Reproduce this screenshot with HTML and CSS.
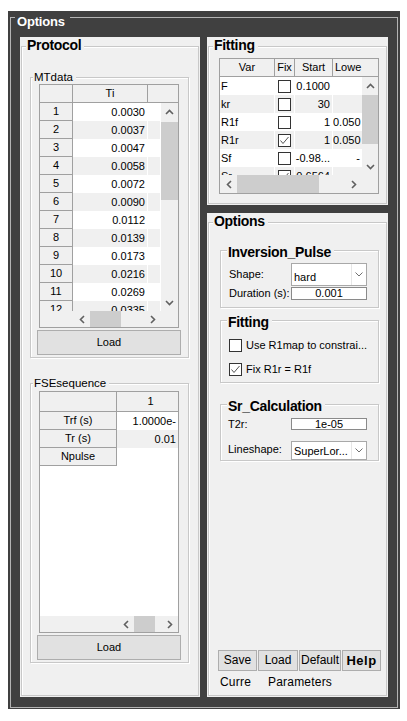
FILE: index.html
```html
<!DOCTYPE html>
<html>
<head>
<meta charset="utf-8">
<link rel="stylesheet" href="styles.css">
</head>
<body>
<div class="outer">
  <span class="outer-title">Options</span>

  <section class="panel protocol">
    <span class="ptitle">Protocol</span>

    <div class="group mtgroup">
      <span class="gtitle">MTdata</span>
      <div class="tbl mt">
        <div class="thead">
          <div class="th mt-rh"></div>
          <div class="th mt-val">Ti</div>
          <div class="th last grow"></div>
        </div>
        <div class="tbody">
          <div class="rows">
            <div class="row"><div class="rh mt-rh">1</div><div class="cell mt-val num">0.0030</div><div class="cell mt-ext"></div></div>
            <div class="row alt"><div class="rh mt-rh">2</div><div class="cell mt-val num">0.0037</div><div class="cell mt-ext"></div></div>
            <div class="row"><div class="rh mt-rh">3</div><div class="cell mt-val num">0.0047</div><div class="cell mt-ext"></div></div>
            <div class="row alt"><div class="rh mt-rh">4</div><div class="cell mt-val num">0.0058</div><div class="cell mt-ext"></div></div>
            <div class="row"><div class="rh mt-rh">5</div><div class="cell mt-val num">0.0072</div><div class="cell mt-ext"></div></div>
            <div class="row alt"><div class="rh mt-rh">6</div><div class="cell mt-val num">0.0090</div><div class="cell mt-ext"></div></div>
            <div class="row"><div class="rh mt-rh">7</div><div class="cell mt-val num">0.0112</div><div class="cell mt-ext"></div></div>
            <div class="row alt"><div class="rh mt-rh">8</div><div class="cell mt-val num">0.0139</div><div class="cell mt-ext"></div></div>
            <div class="row"><div class="rh mt-rh">9</div><div class="cell mt-val num">0.0173</div><div class="cell mt-ext"></div></div>
            <div class="row alt"><div class="rh mt-rh">10</div><div class="cell mt-val num">0.0216</div><div class="cell mt-ext"></div></div>
            <div class="row"><div class="rh mt-rh">11</div><div class="cell mt-val num">0.0269</div><div class="cell mt-ext"></div></div>
            <div class="row alt"><div class="rh mt-rh">12</div><div class="cell mt-val num">0.0335</div><div class="cell mt-ext"></div></div>
          </div>
          <div class="vscroll">
            <div class="sbtn"><svg class="ar" width="9" height="6" viewBox="0 0 9 6"><polyline points="1,5 4.5,1.5 8,5"/></svg></div>
            <div class="thumb mt-vthumb"></div>
            <div class="fill"></div>
            <div class="sbtn"><svg class="ar" width="9" height="6" viewBox="0 0 9 6"><polyline points="1,1 4.5,4.5 8,1"/></svg></div>
          </div>
        </div>
        <div class="hscroll mt-hs">
          <div class="hs-blank mt-rh"></div>
          <div class="hs-track mt-track">
            <div class="sbtn"><svg class="ar" width="6" height="9" viewBox="0 0 6 9"><polyline points="5,1 1.5,4.5 5,8"/></svg></div>
            <div class="thumb mt-hthumb"></div>
            <div class="fill"></div>
            <div class="sbtn"><svg class="ar" width="6" height="9" viewBox="0 0 6 9"><polyline points="1,1 4.5,4.5 1,8"/></svg></div>
          </div>
          <div class="fill"></div>
        </div>
      </div>
      <button class="btn load">Load</button>
    </div>

    <div class="group fsegroup">
      <span class="gtitle">FSEsequence</span>
      <div class="tbl fse">
        <div class="thead fse-head">
          <div class="th fse-rh"></div>
          <div class="th last fse-hval">1</div>
        </div>
        <div class="tbody">
          <div class="rows fse-rows">
            <div class="row"><div class="rh fse-rh">Trf (s)</div><div class="cell fse-val num">1.0000e-</div></div>
            <div class="row alt"><div class="rh fse-rh">Tr (s)</div><div class="cell fse-val num">0.01</div></div>
            <div class="row"><div class="rh fse-rh">Npulse</div><div class="cell fse-val num"></div></div>
          </div>
        </div>
        <div class="hscroll fse-hs">
          <div class="hs-blank fse-rh"></div>
          <div class="hs-track fse-track">
            <div class="sbtn"><svg class="ar" width="6" height="9" viewBox="0 0 6 9"><polyline points="5,1 1.5,4.5 5,8"/></svg></div>
            <div class="thumb fse-hthumb"></div>
            <div class="fill"></div>
            <div class="sbtn"><svg class="ar" width="6" height="9" viewBox="0 0 6 9"><polyline points="1,1 4.5,4.5 1,8"/></svg></div>
          </div>
        </div>
      </div>
      <button class="btn load">Load</button>
    </div>
  </section>

  <div class="rightcol">
    <section class="panel fitpanel">
      <span class="ptitle">Fitting</span>
      <div class="tbl fit">
        <div class="thead">
          <div class="fit-hview">
            <div class="th f-var">Var</div>
            <div class="th f-fix">Fix</div>
            <div class="th f-start">Start</div>
            <div class="th f-lowh">Lowe</div>
          </div>
          <div class="fill"></div>
        </div>
        <div class="tbody">
          <div class="rows fit-rows">
            <div class="row"><div class="cell f-var txt">F</div><div class="cell f-fix ck"><span class="cb"></span></div><div class="cell f-start num">0.1000</div><div class="cell f-low num"></div></div>
            <div class="row alt"><div class="cell f-var txt">kr</div><div class="cell f-fix ck"><span class="cb"></span></div><div class="cell f-start num">30</div><div class="cell f-low num"></div></div>
            <div class="row"><div class="cell f-var txt">R1f</div><div class="cell f-fix ck"><span class="cb"></span></div><div class="cell f-start num">1</div><div class="cell f-low num">0.050</div></div>
            <div class="row alt"><div class="cell f-var txt">R1r</div><div class="cell f-fix ck"><span class="cb"><svg width="11" height="11" viewBox="0 0 11 11"><polyline points="1.5,5.5 4,8.5 9.5,2"/></svg></span></div><div class="cell f-start num">1</div><div class="cell f-low num">0.050</div></div>
            <div class="row"><div class="cell f-var txt">Sf</div><div class="cell f-fix ck"><span class="cb"></span></div><div class="cell f-start num">-0.98...</div><div class="cell f-low num">-</div></div>
            <div class="row alt"><div class="cell f-var txt">Sr</div><div class="cell f-fix ck"><span class="cb"><svg width="11" height="11" viewBox="0 0 11 11"><polyline points="1.5,5.5 4,8.5 9.5,2"/></svg></span></div><div class="cell f-start num">0.6564</div><div class="cell f-low num"></div></div>
          </div>
          <div class="vscroll fit-vs">
            <div class="sbtn"><svg class="ar" width="9" height="6" viewBox="0 0 9 6"><polyline points="1,5 4.5,1.5 8,5"/></svg></div>
            <div class="thumb fit-vthumb"></div>
            <div class="fill"></div>
            <div class="sbtn"><svg class="ar" width="9" height="6" viewBox="0 0 9 6"><polyline points="1,1 4.5,4.5 8,1"/></svg></div>
          </div>
        </div>
        <div class="hscroll fit-hs">
          <div class="hs-track fit-track">
            <div class="sbtn"><svg class="ar" width="6" height="9" viewBox="0 0 6 9"><polyline points="5,1 1.5,4.5 5,8"/></svg></div>
            <div class="thumb fit-hthumb"></div>
            <div class="fill"></div>
            <div class="sbtn"><svg class="ar" width="6" height="9" viewBox="0 0 6 9"><polyline points="1,1 4.5,4.5 1,8"/></svg></div>
          </div>
          <div class="fill"></div>
        </div>
      </div>
    </section>

    <section class="panel optpanel">
      <span class="ptitle">Options</span>

      <div class="group invgroup">
        <span class="gtitle big">Inversion_Pulse</span>
        <div class="ctlrow r-shape">
          <span class="lbl lbl-shape">Shape:</span>
          <div class="select sel-shape"><span class="stext">hard</span><span class="sarrow"><svg class="dd" width="8" height="5" viewBox="0 0 8 5"><polyline points="0.5,0.5 4,4 7.5,0.5"/></svg></span></div>
        </div>
        <div class="ctlrow r-dur">
          <span class="lbl">Duration (s):</span>
          <div class="input in-dur">0.001</div>
        </div>
      </div>

      <div class="group fitgroup">
        <span class="gtitle big">Fitting</span>
        <div class="cbrow"><span class="cb"></span><span>Use R1map to constrai...</span></div>
        <div class="cbrow cb2"><span class="cb"><svg width="11" height="11" viewBox="0 0 11 11"><polyline points="1.5,5.5 4,8.5 9.5,2"/></svg></span><span>Fix R1r = R1f</span></div>
      </div>

      <div class="group srgroup">
        <span class="gtitle big">Sr_Calculation</span>
        <div class="ctlrow r-t2r">
          <span class="lbl lbl-sr">T2r:</span>
          <div class="input in-t2r">1e-05</div>
        </div>
        <div class="ctlrow r-line">
          <span class="lbl lbl-sr lbl-line">Lineshape:</span>
          <div class="select sel-line"><span class="stext">SuperLor...</span><span class="sarrow"><svg class="dd" width="8" height="5" viewBox="0 0 8 5"><polyline points="0.5,0.5 4,4 7.5,0.5"/></svg></span></div>
        </div>
      </div>

      <div class="fill"></div>

      <div class="btnrow">
        <button class="btn b-save">Save</button>
        <button class="btn b-load">Load</button>
        <button class="btn b-def">Default</button>
        <button class="btn b-help">Help</button>
      </div>
      <div class="curtext"><span class="curre">Curre</span><span>Parameters</span></div>
    </section>
  </div>
</div>
</body>
</html>
```

FILE: styles.css
```css
* { box-sizing: border-box; }
html, body { margin: 0; padding: 0; background: #fff; }
body {
  font-family: "Liberation Sans", Arial, sans-serif;
  font-size: 11px;
  line-height: 13px;
  color: #000;
}

.fill { flex: 1; }

/* outer dark frame */
.outer {
  position: relative;
  margin: 11px 0 0 8px;
  width: 392px;
  height: 698px;
  background: #404040;
  padding: 26px 12px 12px;
  display: flex;
  gap: 7px;
}
.outer::before {
  content: "";
  position: absolute;
  top: 6px; left: 2px; right: 2px; bottom: 1px;
  border: 1px solid #b4b4b4;
}
.outer-title {
  position: absolute;
  top: 3px; left: 7px;
  z-index: 2;
  padding: 0 5px 0 2px;
  background: #404040;
  color: #fff;
  font-weight: bold;
  font-size: 13px;
  line-height: 15px;
  letter-spacing: -0.2px;
}

/* panels */
.panel { position: relative; background: #f0f0f0; }
.panel::before {
  content: "";
  position: absolute;
  top: 9px; left: 1px; right: 1px; bottom: 1px;
  border: 1px solid #c8c8c8;
  box-shadow: inset 1px 1px 0 #fff;
}
.ptitle {
  position: absolute;
  top: 0; left: 6px;
  z-index: 2;
  padding: 0 3px 0 1px;
  background: #f0f0f0;
  font-weight: bold;
  font-size: 14px;
  line-height: 16px;
  letter-spacing: -0.3px;
}
.protocol { width: 180px; height: 660px; padding: 40px 0 0 10px; }
.rightcol { width: 181px; display: flex; flex-direction: column; gap: 8px; }
.fitpanel { height: 168px; padding: 21px 0 0 12px; }
.optpanel {
  height: 484px;
  padding: 37px 0 8px 13px;
  display: flex;
  flex-direction: column;
}

/* group boxes */
.group {
  position: relative;
  border: 1px solid #c8c8c8;
  box-shadow: inset 1px 1px 0 #fff, 1px 1px 0 #fff;
}
.gtitle {
  position: absolute;
  top: -7px; left: 2px;
  z-index: 2;
  padding: 0 3px 0 1px;
  background: #f0f0f0;
  font-size: 11.5px;
  line-height: 13px;
}
.gtitle.big {
  left: 6px;
  font-weight: bold;
  font-size: 14px;
  line-height: 16px;
  letter-spacing: -0.3px;
}
.mtgroup { width: 159px; height: 281px; padding: 6px 0 0 8px; }
.fsegroup { width: 159px; height: 280px; margin-top: 25px; padding: 7px 0 0 8px; }

/* tables */
.tbl {
  border: 1px solid #a0a0a0;
  background: #fff;
  display: flex;
  flex-direction: column;
  overflow: hidden;
  white-space: nowrap;
}
.thead {
  display: flex;
  flex: none;
  height: 18px;
  background: #f0f0f0;
  border-bottom: 1px solid #a0a0a0;
}
.th {
  flex: none;
  height: 100%;
  border-right: 1px solid #a0a0a0;
  text-align: center;
  line-height: 17px;
  overflow: hidden;
}
.th.last { border-right: 0; }
.th.grow { flex: 1; }
.tbody { display: flex; flex: 1; min-height: 0; }
.rows { flex: none; overflow: hidden; }
.row { display: flex; height: 18px; }
.cell {
  flex: none;
  height: 100%;
  line-height: 18px;
  border-right: 1px solid #fff;
  overflow: hidden;
}
.row.alt .cell { background: #f0f0f0; }
.num { text-align: right; padding-right: 2px; }
.txt { padding-left: 1px; }
.rh {
  flex: none;
  height: 100%;
  background: #f0f0f0;
  border-right: 1px solid #a0a0a0;
  border-bottom: 1px solid #a0a0a0;
  text-align: center;
  line-height: 17px;
}

/* scrollbars */
.vscroll {
  flex: none;
  width: 17px;
  background: #f0f0f0;
  display: flex;
  flex-direction: column;
}
.hscroll { flex: none; display: flex; background: #f0f0f0; }
.hs-track { flex: none; display: flex; }
.hs-blank { flex: none; background: #f0f0f0; }
.sbtn {
  flex: none;
  width: 17px;
  height: 17px;
  display: flex;
  align-items: center;
  justify-content: center;
}
.hscroll .sbtn { height: auto; }
.thumb { flex: none; background: #cdcdcd; }
.ar polyline { fill: none; stroke: #606060; stroke-width: 1.6; }

/* MTdata table */
.mt { width: 140px; height: 244px; }
.mt .rows { width: 121px; }
.mt-rh { width: 33px; }
.mt-val { width: 75px; }
.mt-ext { width: 13px; }
.mt-vthumb { margin-top: 2px; height: 78px; }
.mt-hs { height: 16px; }
.mt-track { width: 88px; }
.mt-hthumb { width: 31px; }

/* FSE table */
.fse { width: 140px; height: 242px; }
.fse-head { height: 20px; }
.fse-head .th { line-height: 19px; }
.fse-hval { width: 61px; padding-left: 6px; }
.fse-rows { width: 138px; }
.fse-rh { width: 77px; }
.fse-val { width: 61px; border-right: 0; }
.fse-hs { height: 16px; }
.fse-track { width: 61px; }
.fse-hthumb { width: 21px; }

/* Fitting table */
.fit { width: 160px; height: 136px; }
.fit-hview { display: flex; width: 142px; flex: none; overflow: hidden; }
.fit-rows { width: 142px; }
.f-var { width: 55px; }
.f-fix { width: 20px; }
.f-start { width: 38px; }
.f-low { width: 29px; border-right: 0; }
.th.f-lowh { width: 29px; border-right: 0; text-align: left; padding-left: 2px; }
.ck { display: flex; align-items: center; justify-content: center; }
.fit-vs { width: 16px; }
.fit-vs .sbtn { width: 16px; }
.fit-vthumb { margin-top: 1px; height: 49px; }
.fit-hs { height: 18px; }
.fit-track { width: 142px; }
.fit-hthumb { width: 82px; }

/* checkbox */
.cb {
  flex: none;
  width: 13px;
  height: 13px;
  border: 1px solid #333;
  background: #fff;
  display: flex;
  align-items: center;
  justify-content: center;
}
.cb polyline { fill: none; stroke: #555; stroke-width: 1; }

/* option controls */
.ctlrow { display: flex; align-items: flex-start; }
.lbl { flex: none; width: 62px; }
.lbl-sr { width: 63px; }
.select {
  flex: none;
  width: 76px;
  background: #fff;
  border: 1px solid #a8a8a8;
  display: flex;
}
.stext { flex: 1; padding-left: 2px; overflow: hidden; }
.sarrow {
  flex: none;
  width: 15px;
  border-left: 1px solid #e6e6e6;
  display: flex;
  align-items: center;
  justify-content: center;
}
.dd polyline { fill: none; stroke: #707070; stroke-width: 1; }
.input {
  flex: none;
  width: 76px;
  background: #fff;
  border: 1px solid #8a8a8a;
  text-align: center;
}

.invgroup { width: 159px; height: 58px; padding: 12px 0 0 8px; }
.r-shape { height: 23px; }
.lbl-shape { padding-top: 5px; }
.sel-shape { height: 23px; }
.sel-shape .stext { padding-top: 7px; }
.r-dur { margin-top: 1px; }
.in-dur { height: 13px; line-height: 11px; }

.fitgroup { width: 159px; height: 63px; margin-top: 12px; padding: 18px 0 0 8px; }
.cbrow { display: flex; align-items: center; gap: 4px; height: 13px; }
.cb2 { margin-top: 11px; }

.srgroup { width: 159px; height: 57px; margin-top: 21px; padding: 13px 0 0 7px; }
.r-t2r { height: 12px; }
.r-t2r .lbl { line-height: 12px; }
.in-t2r { height: 12px; line-height: 10px; }
.r-line { margin-top: 11px; }
.lbl-line { padding-top: 2px; }
.sel-line { height: 19px; }
.sel-line .stext { padding-top: 3px; }

/* buttons */
.btn {
  display: block;
  padding: 0;
  height: 21px;
  border: 1px solid #adadad;
  background: #e1e1e1;
  color: #000;
  font-family: "Liberation Sans", Arial, sans-serif;
  font-size: 12px;
  line-height: 19px;
}
.btn.load { width: 144px; height: 25px; margin: 2px 0 0 -2px; font-size: 11px; }
.btnrow { display: flex; gap: 1px; margin-left: -2px; }
.b-save { width: 39px; }
.b-load { width: 40px; }
.b-def { width: 42px; }
.b-help { width: 39px; font-weight: bold; font-size: 13px; letter-spacing: 0.5px; }
.curtext { display: flex; margin-top: 4px; font-size: 12px; line-height: 14px; letter-spacing: 0.2px; }
.curre { width: 48px; }
```
